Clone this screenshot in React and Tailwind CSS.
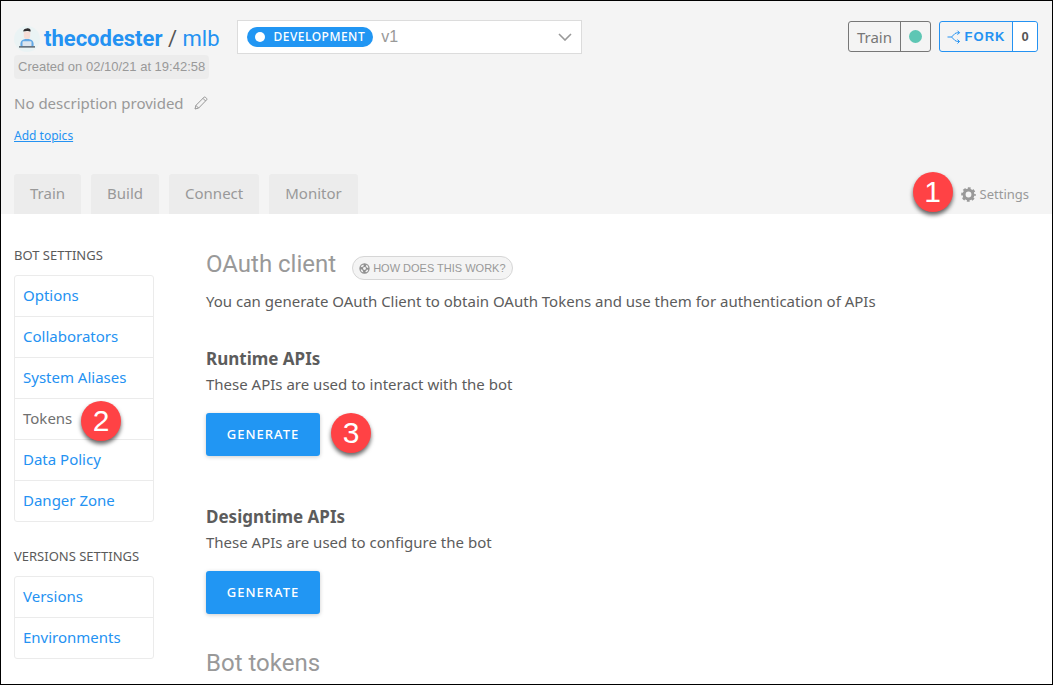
const botSettings = ["Options", "Collaborators", "System Aliases", "Tokens", "Data Policy", "Danger Zone"];
const versionSettings = ["Versions", "Environments"];
const tabs = ["Train", "Build", "Connect", "Monitor"];

function Marker({ children, className = "" }) {
  return (
    <span
      className={`flex size-10 shrink-0 items-center justify-center rounded-full bg-[#ff4245] font-['Liberation_Sans',sans-serif] text-[30px] leading-10 text-white shadow-[0_3px_4px_rgba(0,0,0,0.6)] ${className}`}
    >
      {children}
    </span>
  );
}

function Avatar() {
  return (
    <svg viewBox="0 0 26 26" className="size-[26px] shrink-0" aria-hidden="true">
      <circle cx="13" cy="13" r="13" fill="#eaf3f4" />
      <path d="M9.8 5.500h6.400v4a3.200 3.800 0 0 1-6.400 0z" fill="#f7ddd6" />
      <path d="M9.300 5.600c-.3-2.200 1.800-3 3.400-3.200 2-.5 4.500 .5 3.900 3.200-1.300-.7-5.300-1-7.300 0z" fill="#2f2d2f" />
      <path d="M6.500 20.300c-.6-5 1.200-7.300 6.500-7.300s7.100 2.300 6.500 7.300z" fill="#62a8e5" />
      <rect x="8.500" y="15.300" width="9" height="5" rx=".8" fill="#dce5ee" />
      <path d="M5 20.300h16v1.200H5z" fill="#39424e" />
    </svg>
  );
}

function SideMenu({ title, items, current }) {
  return (
    <nav aria-label={title}>
      <h2 className="text-[13px] leading-5 text-[#5a5a5a]">{title}</h2>
      <ul className="mt-[10px] rounded-[3px] border border-[#ebebeb]">
        {items.map((item) => (
          <li key={item} className="relative border-b border-[#ebebeb] last:border-b-0">
            <a
              href="#"
              aria-current={item === current ? "page" : undefined}
              className={`block px-2 pb-0.5 text-[15px] leading-[38px] ${item === current ? "text-[#707070]" : "text-[#2492f2]"}`}
            >
              {item}
            </a>
            {item === current && <Marker className="absolute top-0.5 left-[66px] z-10">2</Marker>}
          </li>
        ))}
      </ul>
    </nav>
  );
}

function ApiSection({ title, text, marker }) {
  return (
    <section>
      <h3 className="text-[17px] leading-[26px] font-bold text-[#5c5c5c]">{title}</h3>
      <p className="text-[15px] leading-6 text-[#5c5c5c]">{text}</p>
      <div className="mt-[17px] flex items-start gap-[11px]">
        <button
          type="button"
          className="h-[43px] w-[114px] rounded-[3px] bg-[#2196f3] text-[13px] font-medium tracking-[1px] text-white shadow-[0_1px_4px_rgba(0,0,0,0.2)]"
        >
          GENERATE
        </button>
        {marker && <Marker>{marker}</Marker>}
      </div>
    </section>
  );
}

export default function App() {
  return (
    <div className="min-h-screen border border-black bg-white font-['Noto_Sans',sans-serif]">
      <header className="bg-[#f4f4f4] pr-[14px] pl-[13px]">
        <div className="flex items-start pt-[19px]">
          <div>
            <div className="flex h-[35px] items-center gap-1 pt-0.5">
              <Avatar />
              <h1 className="font-[Roboto,sans-serif] text-[22px] leading-8 whitespace-nowrap text-[#555]">
                <a href="#" className="font-bold text-[#2492f2]">thecodester</a>
                {" / "}
                <a href="#" className="text-[#2492f2]">mlb</a>
              </h1>
            </div>
            <p className="w-fit rounded-sm bg-[#ececec] px-1 font-['Liberation_Sans',sans-serif] text-[13px] leading-6 text-[#999]">
              Created on 02/10/21 at 19:42:58
            </p>
          </div>
          <div className="ml-[18px] flex h-[34px] w-[345px] items-center border border-[#dcdcdc] bg-white px-[9px]">
            <label
              htmlFor="version"
              className="flex h-5 shrink-0 items-center gap-2 rounded-full bg-[#2196f3] px-2 text-[12px] font-medium tracking-[0.5px] text-white"
            >
              <span className="size-[10px] rounded-full bg-white" />
              DEVELOPMENT
            </label>
            <div className="relative flex flex-1 items-center">
              <select
                id="version"
                className="h-8 w-full appearance-none bg-transparent pl-2 font-['Liberation_Sans',sans-serif] text-base text-[#999]"
              >
                <option>v1</option>
              </select>
              <svg viewBox="0 0 14 8" className="pointer-events-none absolute right-0 h-2 w-3.5" fill="none" stroke="#999" strokeWidth="1.6" aria-hidden="true">
                <path d="M1 1l6 6 6-6" />
              </svg>
            </div>
          </div>
          <div className="ml-auto flex gap-2 pt-px">
            <button type="button" className="flex h-[31px] rounded-[3px] border border-[#777] text-[15px] leading-[30px] text-[#777]">
              <span className="w-[52px] border-r border-[#777]">Train</span>
              <span className="flex w-[29px] items-center justify-center self-stretch">
                <span className="size-[13px] rounded-full bg-[#5ec6b4]" />
              </span>
            </button>
            <button type="button" className="flex h-[31px] rounded-[3px] border border-[#2492f2] font-['Liberation_Sans',sans-serif] text-[13px] font-bold text-[#2492f2]">
              <span className="flex w-[73px] items-center justify-center gap-1 self-stretch border-r border-[#2492f2] tracking-[1px]">
                <svg viewBox="0 0 14 14" className="size-3.5" fill="none" stroke="currentColor" strokeWidth="1" aria-hidden="true">
                  <path d="M.5 7H4.500L8 3.500Q9 2.700 12.500 2.700M4.500 7L8 10.500Q9 11.500 12.500 11.500M10.500 .7l2 2-2 2M10.500 9.500l2 2-2 2" />
                </svg>
                FORK
              </span>
              <span className="flex w-6 items-center justify-center self-stretch rounded-r-[3px] bg-white text-[#555]">0</span>
            </button>
          </div>
        </div>
        <p className="mt-3 flex items-center gap-[10px] text-[15px] leading-6 text-[#999]">
          No description provided
          <button type="button" aria-label="Edit description">
            <svg viewBox="0 0 14 14" className="size-3.5" fill="none" stroke="#8c8c8c" strokeWidth="0.9" aria-hidden="true">
              <path d="M1 13l.9-3.600L10 1.300q.8-.6 1.500 0l1.100 1.100q.7.800 0 1.500L4.600 12.100zM9 2.400L11.600 5M1.900 9.400l2.700 2.700" />
            </svg>
          </button>
        </p>
        <a href="#" className="mt-[11px] block w-fit text-[12px] leading-5 text-[#2492f2] underline">Add topics</a>
        <div className="mt-[26px] flex items-end">
          <nav aria-label="Bot sections" className="flex gap-[10px]">
            {tabs.map((tab) => (
              <a key={tab} href="#" className="rounded-t-[3px] bg-[#ececec] px-4 pb-0.5 text-[15px] leading-[38px] text-[#999]">
                {tab}
              </a>
            ))}
          </nav>
          <div className="ml-auto flex items-end gap-2 pr-[9px]">
            <Marker className="mb-0.5">1</Marker>
            <a href="#" className="flex items-center gap-1 text-[13px] leading-10 text-[#999]">
              <svg viewBox="0 0 16 16" className="size-[15px]" fill="none" stroke="#999" aria-hidden="true">
                <circle cx="8" cy="8" r="4.700" strokeWidth="3.200" />
                <circle cx="8" cy="8" r="6.600" strokeWidth="2.400" strokeDasharray="2.900 2.284" strokeDashoffset="1.450" />
              </svg>
              Settings
            </a>
          </div>
        </div>
      </header>

      <div className="flex gap-[52px] pt-[31px] pl-[13px]">
        <aside className="flex w-[140px] shrink-0 flex-col gap-6">
          <SideMenu title="BOT SETTINGS" items={botSettings} current="Tokens" />
          <SideMenu title="VERSIONS SETTINGS" items={versionSettings} />
        </aside>
        <main className="min-w-0 flex-1">
          <div className="flex items-center gap-4">
            <h2 className="pt-0.5 font-[Roboto,sans-serif] text-2xl leading-[34px] text-[#999]">OAuth client</h2>
            <a
              href="#"
              className="mt-[10px] flex h-6 items-center gap-[3px] rounded-full border border-[#d6d6d6] bg-[#f4f4f4] px-1.5 font-['Liberation_Sans',sans-serif] text-[11px] text-[#999]"
            >
              <svg viewBox="0 0 12 12" className="size-[11px]" fill="none" stroke="#8f8f8f" aria-hidden="true">
                <circle cx="6" cy="6" r="5" strokeWidth="1.300" />
                <circle cx="6" cy="6" r="2.200" strokeWidth="1.200" />
                <circle cx="6" cy="6" r="3.700" strokeWidth="2.400" strokeDasharray="2.900 2.912" strokeDashoffset="1.450" />
              </svg>
              HOW DOES THIS WORK?
            </a>
          </div>
          <p className="mt-2 text-[15px] leading-6 text-[#5c5c5c]">
            You can generate OAuth Client to obtain OAuth Tokens and use them for authentication of APIs
          </p>
          <div className="mt-[33px] flex flex-col gap-12">
            <ApiSection title="Runtime APIs" text="These APIs are used to interact with the bot" marker="3" />
            <ApiSection title="Designtime APIs" text="These APIs are used to configure the bot" />
          </div>
          <h2 className="mt-8 font-[Roboto,sans-serif] text-2xl leading-[34px] text-[#999]">Bot tokens</h2>
        </main>
      </div>
    </div>
  );
}
